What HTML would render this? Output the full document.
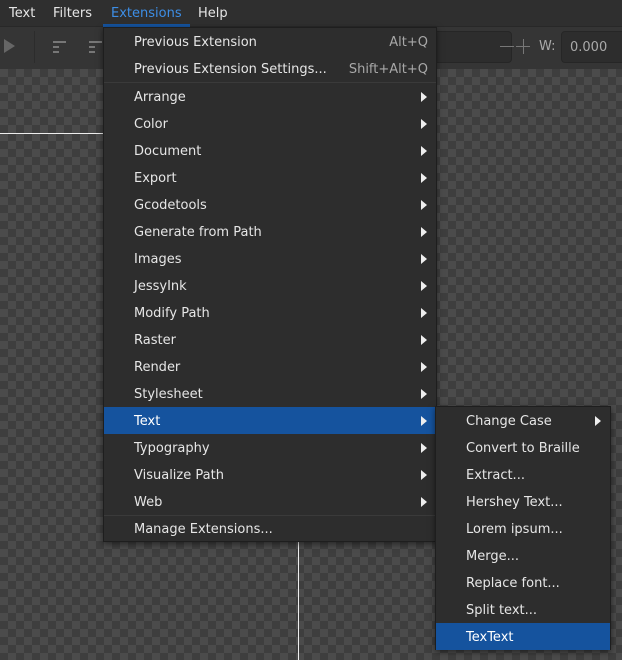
<!DOCTYPE html>
<html><head><style>
*{margin:0;padding:0;box-sizing:border-box}
body{width:622px;height:660px;overflow:hidden;background:#353535;font-family:"DejaVu Sans","Liberation Sans",sans-serif;font-size:13px;color:#e6e6e6;position:relative}
.mb{position:absolute;left:0;top:0;width:622px;height:27px;background:#2f2f2f;border-bottom:1px solid #282828}
.mb span{position:absolute;top:6px}
.tb{position:absolute;left:0;top:27px;width:622px;height:42px;background:#353535}
.cv{position:absolute;left:0;top:69px;width:622px;height:591px;background-color:#3e3e3e;
background-image:linear-gradient(45deg,#4b4b4b 25%,transparent 25%,transparent 75%,#4b4b4b 75%),linear-gradient(45deg,#4b4b4b 25%,transparent 25%,transparent 75%,#4b4b4b 75%);
background-size:16px 16px;background-position:8px 0,0 8px}
.menu{position:absolute;background:#2d2d2d;border:1px solid #1e1e1e;box-shadow:0 2px 6px rgba(0,0,0,.5)}
.it{position:absolute;left:0;right:0;height:27px;line-height:29px}
.it .l{position:absolute;left:30px}
.it .r{position:absolute;right:8px;color:#a8a8a8}
.it.sel{background:#15539e;color:#fff}
.ar{position:absolute;right:9px;top:9px;width:0;height:0;border-left:6px solid #eee;border-top:5px solid transparent;border-bottom:5px solid transparent}
.sep{position:absolute;left:0;right:0;height:1px;background:#3a3a3a}
</style></head><body>
<div class="cv"></div>
<div style="position:absolute;left:0;top:133px;width:103px;height:1px;background:#eee"></div>
<div style="position:absolute;left:298px;top:541px;width:1px;height:119px;background:#eee"></div>
<div class="tb">
<div style="position:absolute;left:34px;top:4px;width:1px;height:32px;background:#2c2c2c"></div>
<div style="position:absolute;left:4px;top:12px;width:0;height:0;border-left:11px solid #666;border-top:7px solid transparent;border-bottom:7px solid transparent"></div>
<div style="position:absolute;left:53px;top:14px;width:13px;height:2px;background:#777"></div>
<div style="position:absolute;left:53px;top:19px;width:6px;height:2px;background:#777"></div>
<div style="position:absolute;left:53px;top:24px;width:6px;height:2px;background:#777"></div>
<div style="position:absolute;left:89px;top:14px;width:13px;height:2px;background:#777"></div>
<div style="position:absolute;left:89px;top:19px;width:6px;height:2px;background:#777"></div>
<div style="position:absolute;left:89px;top:24px;width:6px;height:2px;background:#777"></div>
<div style="position:absolute;left:430px;top:4px;width:82px;height:32px;border:1px solid #262626;border-radius:4px;background:#2d2d2d"></div>
<div style="position:absolute;left:500px;top:19px;width:14px;height:1px;background:#777"></div>
<div style="position:absolute;left:516px;top:19px;width:14px;height:1px;background:#777"></div>
<div style="position:absolute;left:523px;top:12px;width:1px;height:15px;background:#777"></div>
<span style="position:absolute;left:539px;top:12px;color:#aaa">W:</span>
<div style="position:absolute;left:561px;top:4px;width:70px;height:32px;border:1px solid #262626;border-radius:4px;background:#2d2d2d;color:#aaa;padding:8px 0 0 8px">0.000</div>
</div>
<div class="mb">
<span style="left:9px">Text</span><span style="left:53px">Filters</span>
<span style="left:111px;color:#3d8ee6">Extensions</span><span style="left:198px">Help</span>
<div style="position:absolute;left:103px;top:24px;width:87px;height:3px;background:#15539e"></div>
</div>
<div class="menu" style="left:103px;top:27px;width:334px;height:515px">
<div class="it" style="top:0"><span class="l">Previous Extension</span><span class="r">Alt+Q</span></div>
<div class="it" style="top:27px"><span class="l">Previous Extension Settings...</span><span class="r">Shift+Alt+Q</span></div>
<div class="sep" style="top:54px"></div>
<div class="it" style="top:55px"><span class="l">Arrange</span><i class="ar"></i></div>
<div class="it" style="top:82px"><span class="l">Color</span><i class="ar"></i></div>
<div class="it" style="top:109px"><span class="l">Document</span><i class="ar"></i></div>
<div class="it" style="top:136px"><span class="l">Export</span><i class="ar"></i></div>
<div class="it" style="top:163px"><span class="l">Gcodetools</span><i class="ar"></i></div>
<div class="it" style="top:190px"><span class="l">Generate from Path</span><i class="ar"></i></div>
<div class="it" style="top:217px"><span class="l">Images</span><i class="ar"></i></div>
<div class="it" style="top:244px"><span class="l">JessyInk</span><i class="ar"></i></div>
<div class="it" style="top:271px"><span class="l">Modify Path</span><i class="ar"></i></div>
<div class="it" style="top:298px"><span class="l">Raster</span><i class="ar"></i></div>
<div class="it" style="top:325px"><span class="l">Render</span><i class="ar"></i></div>
<div class="it" style="top:352px"><span class="l">Stylesheet</span><i class="ar"></i></div>
<div class="it sel" style="top:379px"><span class="l">Text</span><i class="ar"></i></div>
<div class="it" style="top:406px"><span class="l">Typography</span><i class="ar"></i></div>
<div class="it" style="top:433px"><span class="l">Visualize Path</span><i class="ar"></i></div>
<div class="it" style="top:460px"><span class="l">Web</span><i class="ar"></i></div>
<div class="sep" style="top:487px"></div>
<div class="it" style="top:487px"><span class="l">Manage Extensions...</span></div>
</div>
<div class="menu" style="left:435px;top:406px;width:176px;height:244px">
<div class="it" style="top:0"><span class="l">Change Case</span><i class="ar"></i></div>
<div class="it" style="top:27px"><span class="l">Convert to Braille</span></div>
<div class="it" style="top:54px"><span class="l">Extract...</span></div>
<div class="it" style="top:81px"><span class="l">Hershey Text...</span></div>
<div class="it" style="top:108px"><span class="l">Lorem ipsum...</span></div>
<div class="it" style="top:135px"><span class="l">Merge...</span></div>
<div class="it" style="top:162px"><span class="l">Replace font...</span></div>
<div class="it" style="top:189px"><span class="l">Split text...</span></div>
<div class="it sel" style="top:216px"><span class="l">TexText</span></div>
</div>
</body></html>
